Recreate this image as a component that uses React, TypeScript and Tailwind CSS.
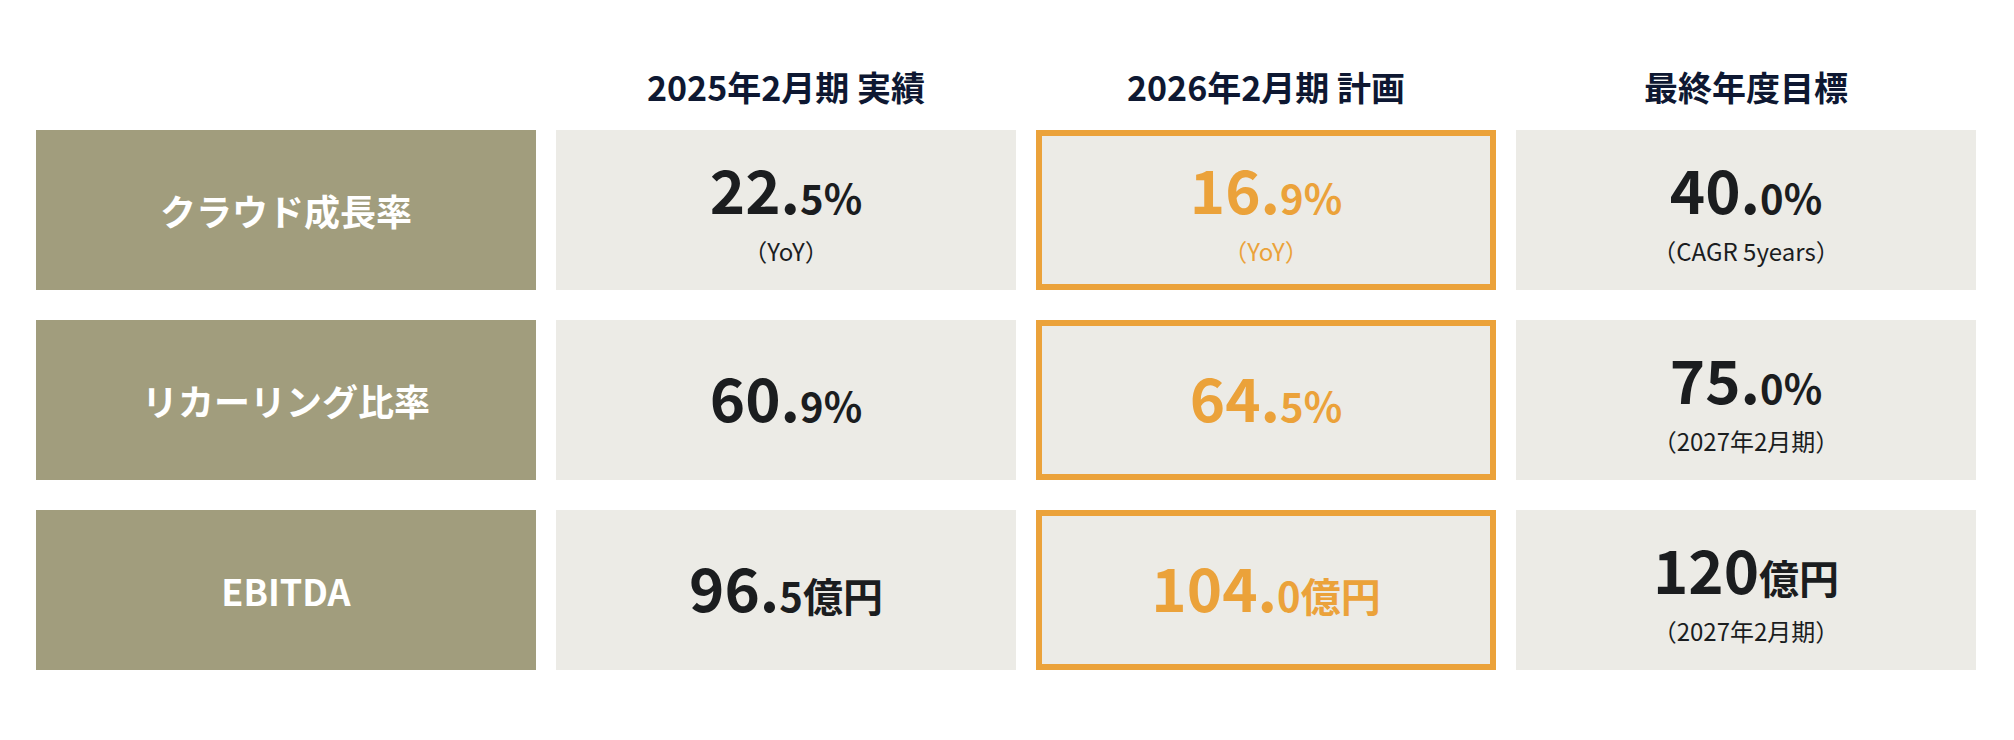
import React from "react";

type Cell = {
  big: string;
  small: string;
  sub?: string;
};

type Row = {
  label: string;
  actual: Cell;
  plan: Cell;
  goal: Cell;
};

const rows: Row[] = [
  {
    label: "クラウド成長率",
    actual: {big: "22.", small: "5%", sub: "（YoY）"},
    plan: {big: "16.", small: "9%", sub: "（YoY）"},
    goal: {big: "40.", small: "0%", sub: "（CAGR 5years）"},
  },
  {
    label: "リカーリング比率",
    actual: {big: "60.", small: "9%"},
    plan: {big: "64.", small: "5%"},
    goal: {big: "75.", small: "0%", sub: "（2027年2月期）"},
  },
  {
    label: "EBITDA",
    actual: {big: "96.", small: "5億円"},
    plan: {big: "104.", small: "0億円"},
    goal: {big: "120", small: "億円", sub: "（2027年2月期）"},
  },
];

const headers = ["2025年2月期 実績", "2026年2月期 計画", "最終年度目標"];

const Value = ({cell, accent}: {cell: Cell; accent?: boolean}) => (
  <div className={accent ? "flex flex-col items-center text-[#eba23a]" : "flex flex-col items-center text-[#1b1d1f]"}>
    <div className="flex items-baseline font-bold leading-[72px]">
      <span className="text-[60px]">{cell.big}</span>
      <span className="text-[40px]">{cell.small}</span>
    </div>
    {cell.sub && <div className="text-[24px] font-normal leading-[34px] mt-[1px]">{cell.sub}</div>}
  </div>
);

export default function App() {
  return (
    <div
      className="w-[2014px] h-[740px] bg-white pl-9 pt-[62px]"
      style={{fontFamily: '"Noto Sans CJK JP", "Noto Sans", sans-serif'}}
    >
      <div className="grid grid-cols-[500px_460px_460px_460px] gap-x-5">
        <div />
        {headers.map((h) => (
          <div key={h} className="h-12 flex items-center justify-center text-[34px] font-bold text-[#0e1832]">
            {h}
          </div>
        ))}
      </div>
      <div className="mt-5 grid grid-cols-[500px_460px_460px_460px] gap-x-5 gap-y-[30px]">
        {rows.map((r) => (
          <React.Fragment key={r.label}>
            <div className="h-40 bg-[#a19d7d] flex items-center justify-center text-white text-[36px] font-bold">
              {r.label}
            </div>
            <div className="h-40 bg-[#ecebe6] flex items-center justify-center">
              <Value cell={r.actual} />
            </div>
            <div className="h-40 bg-[#ecebe6] border-[6px] border-[#eba23a] flex items-center justify-center">
              <Value cell={r.plan} accent />
            </div>
            <div className="h-40 bg-[#ecebe6] flex items-center justify-center">
              <Value cell={r.goal} />
            </div>
          </React.Fragment>
        ))}
      </div>
    </div>
  );
}
